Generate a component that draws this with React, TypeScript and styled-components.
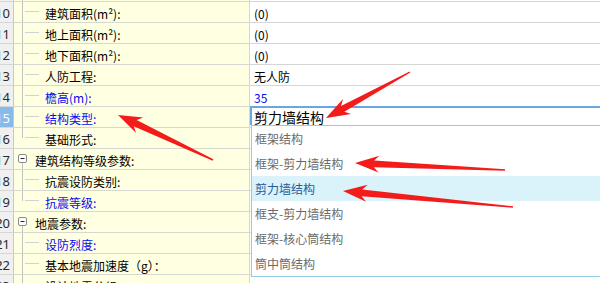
import React, {useLayoutEffect, useRef} from 'react';
import styled, {createGlobalStyle} from 'styled-components';

const GlobalStyle = createGlobalStyle`
  html, body {
    margin: 0;
    padding: 0;
    background: #fff;
    overflow: hidden;
  }
  body {
    font-family: "Noto Sans CJK SC", "Noto Sans", sans-serif;
  }
`;

type TreeKind = 'mid' | 'last' | 'group';

interface PropRow {
  no?: number;
  label: string;
  value?: string;
  tree: TreeKind;
  accent?: boolean;
  valueAccent?: boolean;
  editing?: boolean;
}

// first row is scrolled out of view, only its bottom grid line shows
const ROWS: PropRow[] = [
  {label: '', tree: 'mid'},
  {no: 10, label: '建筑面积(m²):', value: '(0)', tree: 'mid'},
  {no: 11, label: '地上面积(m²):', value: '(0)', tree: 'mid'},
  {no: 12, label: '地下面积(m²):', value: '(0)', tree: 'mid'},
  {no: 13, label: '人防工程:', value: '无人防', tree: 'mid'},
  {no: 14, label: '檐高(m):', value: '35', tree: 'mid', accent: true, valueAccent: true},
  {no: 15, label: '结构类型:', value: '剪力墙结构', tree: 'mid', accent: true, editing: true},
  {no: 16, label: '基础形式:', tree: 'last'},
  {no: 17, label: '建筑结构等级参数:', tree: 'group'},
  {no: 18, label: '抗震设防类别:', tree: 'mid'},
  {no: 19, label: '抗震等级:', tree: 'last', accent: true},
  {no: 20, label: '地震参数:', tree: 'group'},
  {no: 21, label: '设防烈度:', tree: 'mid', accent: true},
  {no: 22, label: '基本地震加速度（g）：', tree: 'mid'},
  {no: 23, label: '设计地震分组:', tree: 'mid'},
];

const OPTIONS = ['框架结构', '框架-剪力墙结构', '剪力墙结构', '框支-剪力墙结构', '框架-核心筒结构', '筒中筒结构'];

// annotation arrows: tip x, tip y, tail x, tail y
const ARROWS: [number, number, number, number][] = [
  [326, 118, 410, 72],
  [118, 115, 213, 160],
  [355, 163, 505, 170],
  [343, 191, 513, 207],
];

export default function App() {
  const scrollRef = useRef<HTMLDivElement>(null);

  useLayoutEffect(() => {
    if (scrollRef.current) scrollRef.current.scrollTop = 19;
  }, []);

  return (
    <>
      <GlobalStyle/>
      <Screen>
        <Scroller ref={scrollRef}>
          {ROWS.map((row, i) => (
            <GridRow key={i}>
              <NumCell $selected={!!row.editing}>{row.no}</NumCell>
              <LabelCell>
                <Connector kind={row.tree}/>
                <LabelText $accent={!!row.accent}>{row.label}</LabelText>
              </LabelCell>
              <ValueCell>
                {row.editing ? (
                  <>
                    <Editor>{row.value}</Editor>
                    <Dropdown>
                      {OPTIONS.map(opt => (
                        <Option key={opt} $active={opt === row.value}>{opt}</Option>
                      ))}
                    </Dropdown>
                  </>
                ) : (
                  <ValueText $accent={!!row.valueAccent}>{row.value}</ValueText>
                )}
              </ValueCell>
            </GridRow>
          ))}
        </Scroller>
        <Annotations width={600} height={283}>
          {ARROWS.map(([tx, ty, ex, ey], i) => <Arrow key={i} tip={[tx, ty]} tail={[ex, ey]}/>)}
        </Annotations>
      </Screen>
    </>
  );
}

const Connector = ({kind}: {kind: TreeKind}) => {
  if (kind === 'group') {
    return (
      <TreeSvg width={21} height={20}>
        <line x1={8.5} y1={14} x2={8.5} y2={20} stroke="#c2c2c2"/>
        <rect x={4.5} y={5.5} width={8} height={8} rx={1.5} fill="#fdfdfd" stroke="#8a8a8a"/>
        <line x1={6.5} y1={9.5} x2={10.5} y2={9.5} stroke="#2a2a2a"/>
      </TreeSvg>
    );
  }
  return (
    <TreeSvg width={31} height={20}>
      <line x1={8.5} y1={0} x2={8.5} y2={kind === 'last' ? 10 : 20} stroke="#c2c2c2"/>
      <line x1={11} y1={9.5} x2={25} y2={9.5} stroke="#d2d2d2"/>
    </TreeSvg>
  );
};

const Arrow = ({tip, tail}: {tip: [number, number]; tail: [number, number]}) => {
  const dx = tail[0] - tip[0];
  const dy = tail[1] - tip[1];
  const len = Math.hypot(dx, dy);
  const angle = Math.atan2(dy, dx) * 180 / Math.PI;
  return (
    <polygon
      transform={`translate(${tip[0]} ${tip[1]}) rotate(${angle})`}
      points={`0,0 24,-8.5 19,-3.4 ${len},-0.7 ${len},0.7 19,3.4 24,8.5`}
      fill="#f41b1b"
    />
  );
};

const Screen = styled.div`
  position: relative;
  width: 600px;
  height: 283px;
  overflow: hidden;
`;

const Scroller = styled.div`
  width: 600px;
  height: 283px;
  overflow: hidden;
`;

const GridRow = styled.div`
  display: flex;
  height: 21px;
`;

const NumCell = styled.div<{$selected: boolean}>`
  display: flex;
  justify-content: flex-end;
  align-items: center;
  box-sizing: border-box;
  flex: 0 0 14px;
  padding: 1px 3px 0 0;
  overflow: hidden;
  white-space: nowrap;
  border-right: 1px solid #c8c8c8;
  border-bottom: 1px solid #d6d6d6;
  background: ${p => p.$selected ? '#86b9ec' : '#f0f0f0'};
  color: ${p => p.$selected ? '#fff' : '#2b2b2b'};
  font-family: "Noto Sans", "DejaVu Sans", sans-serif;
  font-size: 13px;
`;

const LabelCell = styled.div`
  display: flex;
  align-items: center;
  box-sizing: border-box;
  flex: 0 0 236px;
  border-right: 1px solid #d6d6d6;
  border-bottom: 1px solid #d8d8d0;
  background: #ffffe1;
  white-space: nowrap;
  overflow: hidden;
`;

const TreeSvg = styled.svg`
  flex: 0 0 auto;
  display: block;
  align-self: flex-start;
`;

const LabelText = styled.span<{$accent: boolean}>`
  padding-top: 2px;
  font-size: 12px;
  color: ${p => p.$accent ? '#0a0af0' : '#000'};
`;

const ValueCell = styled.div`
  position: relative;
  display: flex;
  align-items: center;
  box-sizing: border-box;
  flex: 1;
  padding-left: 4px;
  border-bottom: 1px solid #d6d6d6;
  background: #fff;
  white-space: nowrap;
`;

const ValueText = styled.span<{$accent: boolean}>`
  padding-top: 2px;
  font-size: 12px;
  color: ${p => p.$accent ? '#0a0af0' : '#000'};
`;

const Editor = styled.div`
  position: absolute;
  top: -1px;
  left: 0;
  right: -60px;
  box-sizing: border-box;
  height: 19px;
  padding: 1px 0 0 2px;
  border-top: 2px solid #6aa6e2;
  border-left: 2px solid #6aa6e2;
  background: #fff;
  font-size: 14px;
  line-height: 17px;
  color: #000;
`;

const Dropdown = styled.div`
  position: absolute;
  top: 18px;
  left: 1px;
  width: 420px;
  border: 1px solid #92cbe3;
  background: #fff;
  z-index: 2;
`;

const Option = styled.div<{$active: boolean}>`
  height: 25px;
  padding-left: 3px;
  font-size: 12px;
  line-height: 25px;
  background: ${p => p.$active ? '#daf2fa' : 'transparent'};
  color: ${p => p.$active ? '#1e5c9c' : '#6a6a6a'};
`;

const Annotations = styled.svg`
  position: absolute;
  top: 0;
  left: 0;
  pointer-events: none;
  z-index: 5;
`;
